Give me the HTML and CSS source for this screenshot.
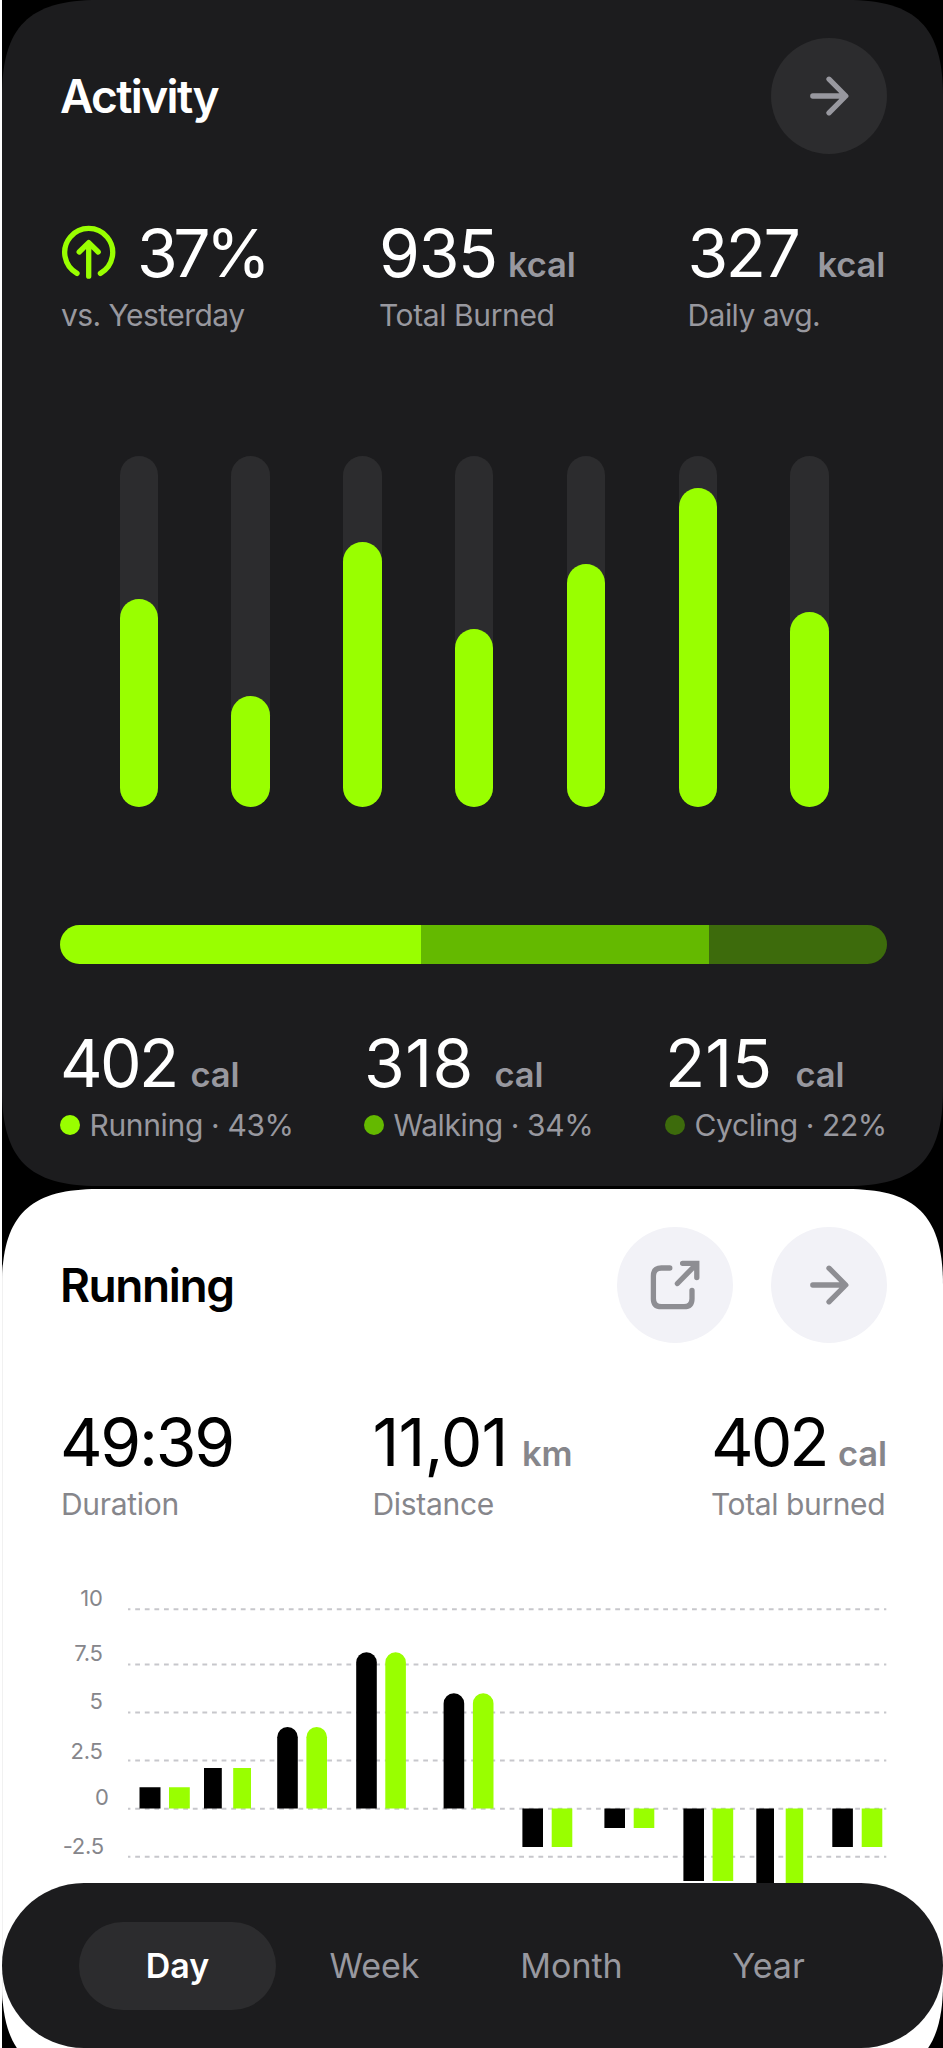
FILE: index.html
```html
<!DOCTYPE html>
<html lang="en">
<head>
<meta charset="utf-8">
<title>Activity</title>
<link rel="stylesheet" href="styles.css">
</head>
<body>
<main class="screen">
  <section class="card card-dark">
    <header class="card-head">
      <h2 class="title title-activity">Activity</h2>
      <button class="round" aria-label="Open activity">
        <svg class="icon" viewBox="0 0 60 60"><path d="M13.8 30H46.5M30 13.2L46.8 30L30 46.8"/></svg>
      </button>
    </header>
    <div class="stats stats-summary">
      <div class="stat">
        <div class="value">
          <svg class="trend" viewBox="0 0 56 56"><path d="M16 48.4A24 24 0 1 1 39.4 48.4M27.7 51.2V18M18.2 27L27.7 17.6L37.2 27"/></svg>
          <span class="num n-pct">37%</span>
        </div>
        <div class="label l-yesterday">vs. Yesterday</div>
      </div>
      <div class="stat">
        <div class="value"><span class="num n-935">935</span><span class="unit">kcal</span></div>
        <div class="label l-total">Total Burned</div>
      </div>
      <div class="stat">
        <div class="value"><span class="num n-327">327</span><span class="unit">kcal</span></div>
        <div class="label l-daily">Daily avg.</div>
      </div>
    </div>
    <div class="week-bars">
      <div class="track"><div class="fill" style="height:208px"></div></div>
      <div class="track"><div class="fill" style="height:111px"></div></div>
      <div class="track"><div class="fill" style="height:265px"></div></div>
      <div class="track"><div class="fill" style="height:178px"></div></div>
      <div class="track"><div class="fill" style="height:243px"></div></div>
      <div class="track"><div class="fill" style="height:319px"></div></div>
      <div class="track"><div class="fill" style="height:195px"></div></div>
    </div>
    <div class="split">
      <div class="part running" style="width:361px"></div>
      <div class="part walking" style="width:288px"></div>
      <div class="part cycling" style="width:178px"></div>
    </div>
    <div class="stats stats-kinds">
      <div class="stat">
        <div class="value"><span class="num n-402">402</span><span class="unit">cal</span></div>
        <div class="label l-running"><i class="dot running"></i>Running · 43%</div>
      </div>
      <div class="stat">
        <div class="value"><span class="num n-318">318</span><span class="unit">cal</span></div>
        <div class="label l-walking"><i class="dot walking"></i>Walking · 34%</div>
      </div>
      <div class="stat">
        <div class="value"><span class="num n-215">215</span><span class="unit">cal</span></div>
        <div class="label l-cycling"><i class="dot cycling"></i>Cycling · 22%</div>
      </div>
    </div>
  </section>

  <section class="card card-light">
    <header class="card-head">
      <h2 class="title title-running">Running</h2>
      <div class="actions">
        <button class="round" aria-label="Share">
          <svg class="icon icon-share" viewBox="0 0 60 60"><path d="M24.8 13H16.4Q8.4 13 8.4 21V43.7Q8.4 51.7 16.4 51.7H39Q47 51.7 47 43.7V35.4M32.4 28.5L51.5 9M37.6 8.3H51.8V22.5"/></svg>
        </button>
        <button class="round" aria-label="Open running">
          <svg class="icon" viewBox="0 0 60 60"><path d="M13.8 30H46.5M30 13.2L46.8 30L30 46.8"/></svg>
        </button>
      </div>
    </header>
    <div class="stats stats-run">
      <div class="stat">
        <div class="value"><span class="num n-time">49:39</span></div>
        <div class="label l-duration">Duration</div>
      </div>
      <div class="stat">
        <div class="value"><span class="num n-dist">11,01</span><span class="unit">km</span></div>
        <div class="label l-distance">Distance</div>
      </div>
      <div class="stat">
        <div class="value"><span class="num n-burn">402</span><span class="unit">cal</span></div>
        <div class="label l-burned">Total burned</div>
      </div>
    </div>
    <svg class="pace" viewBox="60 1580 828 310" width="828" height="310">
      <g class="grid">
        <path d="M128 1609.2H886.3M128 1664.4H886.3M128 1712.4H886.3M128 1760.6H886.3M128 1808.7H886.3M128 1856.8H886.3"/>
      </g>
      <g class="axis">
        <text x="102.5" y="1605.7">10</text>
        <text x="102.5" y="1660.7">7.5</text>
        <text x="102.5" y="1708.7">5</text>
        <text x="102.5" y="1759.4">2.5</text>
        <text x="108.5" y="1805.4">0</text>
        <text x="103.8" y="1853.6">-2.5</text>
      </g>
      <g class="bar-a">
        <path d="M139.5 1787.2h21v21.4h-21zM204 1768h17.8v40.6h-17.8z"/>
        <path d="M277.2 1808.6V1737.3a10.3 10.3 0 0 1 20.6 0V1808.6z"/>
        <path d="M356.2 1808.6V1662.5a10.3 10.3 0 0 1 20.6 0V1808.6z"/>
        <path d="M443.6 1808.6V1703.5a10.3 10.3 0 0 1 20.6 0V1808.6z"/>
        <path d="M522.4 1808.6h20.6v38.4h-20.6zM604.4 1808.6h20.6v19.3h-20.6zM683.4 1808.6h20.6v72.4h-20.6zM756.3 1808.6h17.7v80h-17.7zM832.3 1808.6h20.6v38.4h-20.6z"/>
      </g>
      <g class="bar-b">
        <path d="M169 1787.2h20.8v21.4h-20.8zM233.2 1768h17.8v40.6h-17.8z"/>
        <path d="M306.4 1808.6V1737.3a10.3 10.3 0 0 1 20.6 0V1808.6z"/>
        <path d="M385.3 1808.6V1662.5a10.3 10.3 0 0 1 20.6 0V1808.6z"/>
        <path d="M472.9 1808.6V1703.5a10.3 10.3 0 0 1 20.6 0V1808.6z"/>
        <path d="M551.7 1808.6h20.6v38.4h-20.6zM633.7 1808.6h20.6v19.3h-20.6zM712.6 1808.6h20.6v72.4h-20.6zM785.7 1808.6h17.5v80h-17.5zM861.7 1808.6h20.6v38.4h-20.6z"/>
      </g>
    </svg>
  </section>

  <nav class="period">
    <a class="tab tab-on">Day</a>
    <a class="tab t-week">Week</a>
    <a class="tab t-month">Month</a>
    <a class="tab t-year">Year</a>
  </nav>
</main>
</body>
</html>
```
FILE: styles.css
```css
* { box-sizing: border-box; }
body { margin: 0; background: #fff; font-family: Inter, "Liberation Sans", sans-serif; }
.screen {
  position: relative;
  width: 941px;
  height: 2048px;
  margin-left: 2px;
  background: #000;
  overflow: hidden;
}
.card { padding: 38px 56.5px 0 58px; }
.card-dark {
  height: 1186px;
  background: #1c1c1e;
  color: #fff;
  clip-path: path("M0 96C0 27 27 0 96 0H845C914 0 941 27 941 96V1090C941 1159 914 1186 845 1186H96C27 1186 0 1159 0 1090Z");
}
.card-light {
  height: 890px;
  margin-top: 3px;
  background: #fff;
  color: #000;
  box-shadow: inset 1px 0 #f1f1f1;
  clip-path: path("M0 96C0 27 27 0 96 0H845C914 0 941 27 941 96V794C941 863 914 890 845 890H96C27 890 0 863 0 794Z");
}
.card-head { display: flex; justify-content: space-between; align-items: center; height: 116px; }
.title { margin: 0; font-size: 46px; line-height: 56px; font-weight: 600; }
.title-activity { letter-spacing: -1.65px; }
.title-running { letter-spacing: -1.4px; }
.actions { display: flex; gap: 38px; }
.round {
  display: flex; align-items: center; justify-content: center;
  width: 116px; height: 116px; padding: 0; border: 0; border-radius: 50%;
  background: #2c2c2e;
}
.card-light .round { background: #f2f2f7; }
.icon { width: 60px; height: 60px; fill: none; stroke: #98989f; stroke-width: 5.3; stroke-linecap: round; stroke-linejoin: round; }
.card-light .icon { stroke: #8e8e93; }
.icon-share { stroke-linejoin: miter; }

.stats { display: grid; }
.stats-summary { grid-template-columns: 319px 308.5px 1fr; margin-top: 67px; }
.stats-kinds { grid-template-columns: 304px 301px 1fr; margin-top: 67px; }
.stats-run { grid-template-columns: 312.5px 338.5px 1fr; margin-top: 67px; }
.value { display: flex; align-items: baseline; height: 64px; line-height: 64px; white-space: nowrap; }
.num { font-size: 66px; font-weight: 400; letter-spacing: -2.5px; }
.unit { font-size: 34.5px; font-weight: 600; letter-spacing: -0.1px; color: #98989f; }
.label {
  display: flex; align-items: center;
  height: 40px; margin-top: 10px;
  font-size: 30px; line-height: 40px; letter-spacing: -0.4px; white-space: nowrap; color: #98989f;
}
.card-light .unit, .card-light .label { color: #86868b; }
.trend { align-self: center; width: 56px; height: 56px; margin: 0 20px 0 1px; fill: none; stroke: #9f0; stroke-width: 5.3; stroke-linecap: round; stroke-linejoin: round; }
.n-pct { letter-spacing: -4.5px; }
.n-935 { width: 129px; letter-spacing: -1.3px; }
.n-327 { width: 130px; }
.n-402 { width: 130.5px; letter-spacing: -2.6px; }
.n-318 { width: 130.5px; letter-spacing: 0.5px; }
.n-215 { width: 130.5px; letter-spacing: 0; }
.n-time { letter-spacing: -2.3px; }
.n-dist { width: 149.5px; letter-spacing: -0.9px; }
.n-burn { width: 127px; letter-spacing: -3px; }
.l-yesterday { padding-left: 1px; letter-spacing: -0.55px; }
.l-daily { letter-spacing: -0.55px; }
.l-running { letter-spacing: -0.35px; }
.l-duration { padding-left: 1px; letter-spacing: -0.3px; }
.l-distance { letter-spacing: -0.3px; }
.dot { width: 20px; height: 20px; margin-right: 9.5px; border-radius: 50%; }
.running { background: #9f0; }
.walking { background: #64b900; }
.cycling { background: #3d6b0c; }

.week-bars { display: flex; justify-content: space-between; margin: 121px 57.5px 0 59.5px; }
.track { display: flex; align-items: flex-end; width: 38.5px; height: 351px; border-radius: 20px; background: #2c2c2e; }
.fill { width: 100%; border-radius: 20px; background: #9f0; }
.split { display: flex; height: 39px; margin-top: 118px; border-radius: 20px; overflow: hidden; }

.pace { display: block; margin-top: 56px; overflow: visible; }
.grid { fill: none; stroke: #c7c7cc; stroke-width: 2; stroke-dasharray: 4.8 4.8; stroke-dashoffset: 2.4; }
.axis { font-size: 22px; fill: #86868b; text-anchor: end; letter-spacing: -0.3px; }
.bar-a { fill: #000; }
.bar-b { fill: #9f0; }

.period {
  position: absolute; left: 0; bottom: 0;
  display: flex; align-items: center;
  width: 941px; height: 165px; padding-left: 77px;
  border-radius: 82px; background: #1c1c1e;
}
.tab { width: 197px; height: 88px; border-radius: 44px; text-align: center; font-size: 34px; line-height: 88px; color: #98989f; }
.tab-on { background: #2c2c2e; color: #fff; font-weight: 600; }
```
